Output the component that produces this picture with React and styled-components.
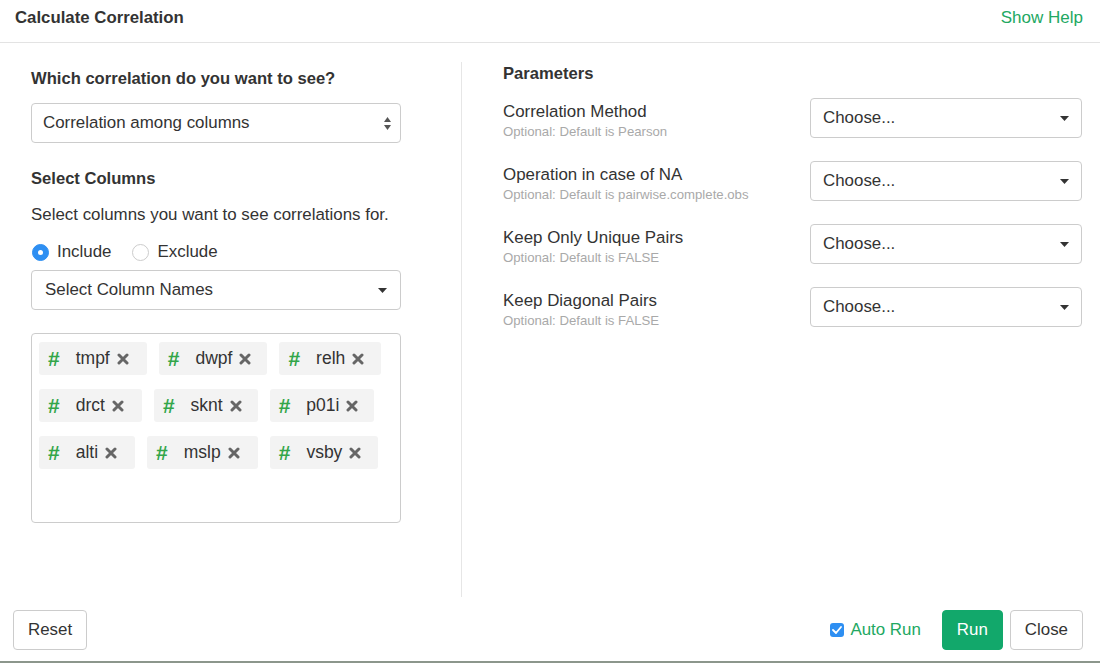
import React, { useState } from "react";
import styled, { createGlobalStyle } from "styled-components";

const GlobalStyle = createGlobalStyle`
  html, body {
    margin: 0;
    padding: 0;
    height: 663px;
    overflow: hidden;
    background: #8c968c;
  }
  body {
    font-family: "Liberation Sans", Arial, sans-serif;
    color: #333;
  }
  * {
    box-sizing: border-box;
  }
`;

const Modal = styled.div`
  width: 1100px;
  height: 661px;
  background: #fff;
  display: flex;
  flex-direction: column;
`;

const Header = styled.div`
  height: 43px;
  border-bottom: 1px solid #e3e3e3;
  display: flex;
  align-items: flex-start;
  justify-content: space-between;
  padding: 8px 17px 0 15px;
  line-height: 20px;
  .title {
    font-size: 16.8px;
    font-weight: bold;
    color: #333;
  }
  .help {
    font-size: 17px;
    color: #22a862;
    cursor: pointer;
  }
`;

const Body = styled.div`
  flex: 1;
  display: flex;
  padding: 19px 18px 0 31px;
`;

const LeftPanel = styled.div`
  width: 370px;
  display: flex;
  flex-direction: column;
`;

const Divider = styled.div`
  width: 1px;
  height: 535px;
  background: #e6e6e6;
  margin: 0 41px 0 60px;
`;

const RightPanel = styled.div`
  flex: 1;
  display: flex;
  flex-direction: column;
`;

const SectionTitle = styled.div`
  font-size: 16.6px;
  font-weight: bold;
  line-height: 20px;
  color: #333;
  margin-top: ${(p) => p.$top || 0}px;
`;

const Text = styled.div`
  font-size: 16.9px;
  line-height: 20px;
  color: #333;
  margin-top: ${(p) => p.$top || 0}px;
`;

const SelectBox = styled.div`
  height: 40px;
  width: ${(p) => p.$width || "100%"};
  border: 1px solid #ccc;
  border-radius: 4px;
  background: #fff;
  display: flex;
  align-items: center;
  justify-content: space-between;
  padding: 0 ${(p) => p.$padRight || 13}px 0 ${(p) => p.$padLeft || 11}px;
  font-size: 16.9px;
  color: #333;
  margin-top: ${(p) => p.$top || 0}px;
  flex-shrink: 0;
`;

const RadioRow = styled.div`
  display: flex;
  align-items: center;
  height: 20px;
  margin-top: 17px;
  font-size: 16.9px;
`;

const RadioItem = styled.label`
  display: flex;
  align-items: center;
  margin-right: 20px;
  cursor: pointer;
`;

const RadioDot = styled.span`
  width: 17px;
  height: 17px;
  border-radius: 50%;
  margin: 0 8px 0 1px;
  display: inline-flex;
  align-items: center;
  justify-content: center;
  background: ${(p) => (p.$on ? "#2e8ff2" : "#fff")};
  border: 1px solid ${(p) => (p.$on ? "#2e8ff2" : "#ccc")};
  &::after {
    content: "";
    width: 5px;
    height: 5px;
    border-radius: 50%;
    background: ${(p) => (p.$on ? "#fff" : "transparent")};
  }
`;

const TagBox = styled.div`
  margin-top: 23px;
  height: 190px;
  border: 1px solid #ccc;
  border-radius: 4px;
  padding: 8px 7px;
  display: flex;
  flex-wrap: wrap;
  align-content: flex-start;
  row-gap: 14px;
  column-gap: 12px;
`;

const Tag = styled.div`
  height: 33px;
  background: #f3f3f3;
  border-radius: 3px;
  display: flex;
  align-items: center;
  padding: 0 ${(p) => p.$padRight}px 0 9px;
  font-size: 17.5px;
  color: #333;
  .hash {
    color: #33a64a;
    font-weight: bold;
    font-size: 21px;
    margin-right: 16px;
  }
  .close {
    margin-left: 7px;
    display: inline-flex;
  }
`;

const ParamRow = styled.div`
  height: 40px;
  display: flex;
  justify-content: space-between;
  margin-top: ${(p) => p.$top}px;
`;

const ParamLabel = styled.div`
  padding-top: 4px;
  .name {
    font-size: 16.9px;
    line-height: 20px;
    color: #333;
  }
  .hint {
    margin-top: 2px;
    font-size: 13.2px;
    line-height: 16px;
    color: #a9a9a9;
  }
`;

const Footer = styled.div`
  height: 64px;
  display: flex;
  align-items: flex-start;
  justify-content: space-between;
  padding: 13px 17px 0 13px;
`;

const Button = styled.button`
  height: 40px;
  padding: 0 ${(p) => p.$pad || 14}px;
  border-radius: 4px;
  font-family: inherit;
  font-size: 16.9px;
  cursor: pointer;
  border: 1px solid ${(p) => (p.$primary ? "#12a86b" : "#ccc")};
  background: ${(p) => (p.$primary ? "#12a86b" : "#fff")};
  color: ${(p) => (p.$primary ? "#fff" : "#333")};
`;

const Actions = styled.div`
  display: flex;
  align-items: center;
  gap: 7px;
`;

const AutoRun = styled.label`
  display: flex;
  align-items: center;
  margin-right: 14px;
  font-size: 16.9px;
  color: #22a862;
  cursor: pointer;
  .box {
    width: 14px;
    height: 14px;
    border-radius: 3px;
    background: #2e8ff2;
    display: inline-flex;
    align-items: center;
    justify-content: center;
    margin-right: 6px;
  }
`;

const Caret = () => (
  <svg width="9" height="5" viewBox="0 0 9 5">
    <path d="M0 0 L9 0 L4.5 5 Z" fill="#333" />
  </svg>
);

const UpDown = () => (
  <svg width="7" height="13" viewBox="0 0 7 13">
    <path d="M0 5 L7 5 L3.5 0 Z" fill="#555" />
    <path d="M0 8 L7 8 L3.5 13 Z" fill="#555" />
  </svg>
);

const CloseIcon = () => (
  <svg width="12" height="12" viewBox="0 0 12 12">
    <path
      d="M2 2 L10 10 M10 2 L2 10"
      stroke="#666"
      strokeWidth="3"
      strokeLinecap="round"
    />
  </svg>
);

const Check = () => (
  <svg width="10" height="8" viewBox="0 0 10 8">
    <path
      d="M1 4 L4 7 L9 1"
      stroke="#fff"
      strokeWidth="1.8"
      fill="none"
      strokeLinecap="round"
      strokeLinejoin="round"
    />
  </svg>
);

const columns = [
  { name: "tmpf", pad: 18 },
  { name: "dwpf", pad: 16 },
  { name: "relh", pad: 17 },
  { name: "drct", pad: 18 },
  { name: "sknt", pad: 16 },
  { name: "p01i", pad: 16 },
  { name: "alti", pad: 18 },
  { name: "mslp", pad: 18 },
  { name: "vsby", pad: 17 },
];

const params = [
  { name: "Correlation Method", hint: "Optional: Default is Pearson" },
  { name: "Operation in case of NA", hint: "Optional: Default is pairwise.complete.obs" },
  { name: "Keep Only Unique Pairs", hint: "Optional: Default is FALSE" },
  { name: "Keep Diagonal Pairs", hint: "Optional: Default is FALSE" },
];

const App = () => {
  const [mode, setMode] = useState("include");

  return (
    <>
      <GlobalStyle />
      <Modal>
        <Header>
          <span className="title">Calculate Correlation</span>
          <span className="help">Show Help</span>
        </Header>
        <Body>
          <LeftPanel>
            <SectionTitle $top={7}>Which correlation do you want to see?</SectionTitle>
            <SelectBox $top={14} $padRight={9}>
              <span>Correlation among columns</span>
              <UpDown />
            </SelectBox>
            <SectionTitle $top={26}>Select Columns</SectionTitle>
            <Text $top={16}>Select columns you want to see correlations for.</Text>
            <RadioRow>
              <RadioItem onClick={() => setMode("include")}>
                <RadioDot $on={mode === "include"} />
                Include
              </RadioItem>
              <RadioItem onClick={() => setMode("exclude")}>
                <RadioDot $on={mode === "exclude"} />
                Exclude
              </RadioItem>
            </RadioRow>
            <SelectBox $top={8} $padLeft={13}>
              <span>Select Column Names</span>
              <Caret />
            </SelectBox>
            <TagBox>
              {columns.map((c) => (
                <Tag key={c.name} $padRight={c.pad}>
                  <span className="hash">#</span>
                  <span>{c.name}</span>
                  <span className="close">
                    <CloseIcon />
                  </span>
                </Tag>
              ))}
            </TagBox>
          </LeftPanel>
          <Divider />
          <RightPanel>
            <SectionTitle $top={2}>Parameters</SectionTitle>
            {params.map((p, i) => (
              <ParamRow key={p.name} $top={i === 0 ? 14 : 23}>
                <ParamLabel>
                  <div className="name">{p.name}</div>
                  <div className="hint">{p.hint}</div>
                </ParamLabel>
                <SelectBox $width="272px" $padLeft={12} $padRight={12}>
                  <span>Choose...</span>
                  <Caret />
                </SelectBox>
              </ParamRow>
            ))}
          </RightPanel>
        </Body>
        <Footer>
          <Button $pad={14}>Reset</Button>
          <Actions>
            <AutoRun>
              <span className="box">
                <Check />
              </span>
              Auto Run
            </AutoRun>
            <Button $primary $pad={14}>Run</Button>
            <Button $pad={14}>Close</Button>
          </Actions>
        </Footer>
      </Modal>
    </>
  );
};

export default App;
